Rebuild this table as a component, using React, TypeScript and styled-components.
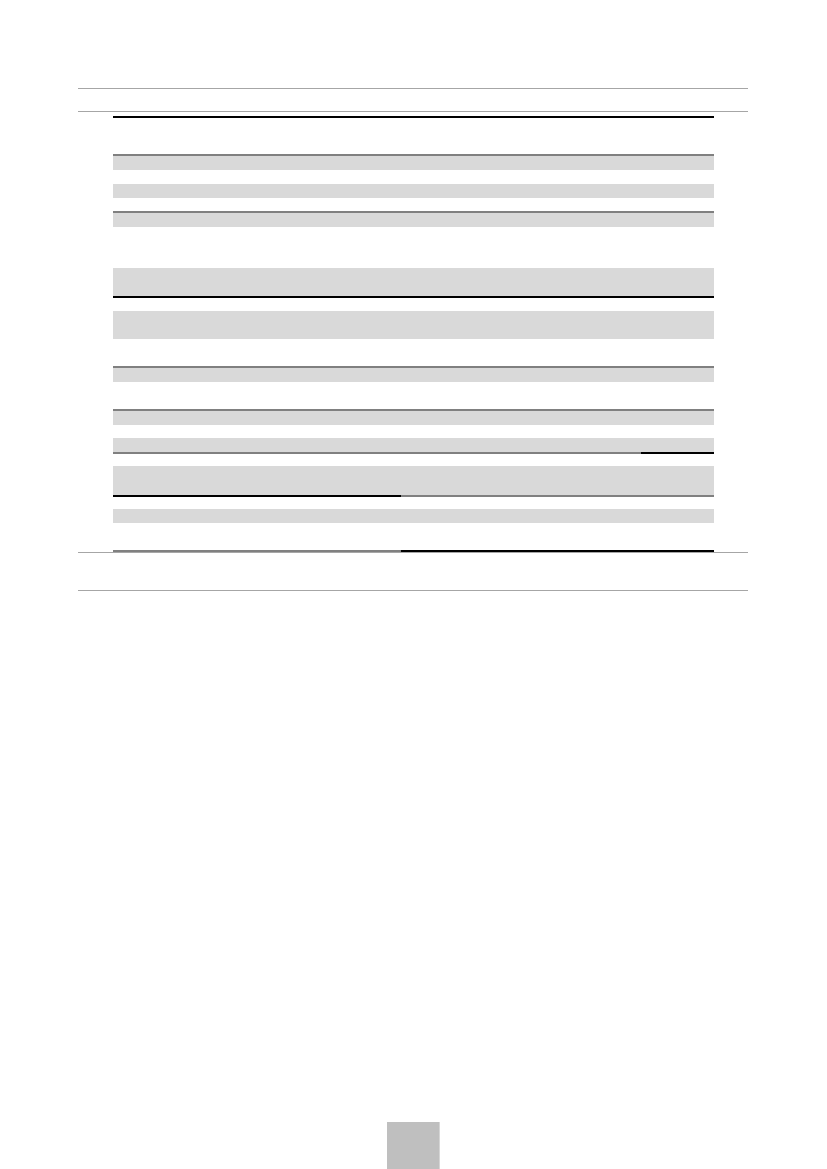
import React from "react";
import styled, {createGlobalStyle} from "styled-components";

const Colors = {
  Band: "#d9d9d9",
  Rule: "#808080",
  Strong: "#000000",
  Page: "#a6a6a6",
  Folio: "#bfbfbf",
};

const GlobalStyle = createGlobalStyle`
  html, body {
    margin: 0;
    padding: 0;
    background: #ffffff;
    font-family: "Liberation Sans", Arial, sans-serif;
  }
`;

const Sheet = styled.div`
  display: flex;
  flex-direction: column;
  width: 827px;
  min-height: 1169px;
`;

const Page = styled.section`
  display: flex;
  flex-direction: column;

  width: 670px;
  margin-left: 78px;
  padding-top: 88px;
`;

const RuleBand = styled.div<{$h: number}>`
  height: ${(p) => p.$h}px;
  border-top: 1px solid ${Colors.Page};
  border-bottom: 1px solid ${Colors.Page};
`;

const Table = styled.div`
  display: flex;
  flex-direction: column;

  width: 601px;
  margin: 4px 0 0 35px;
`;

const Row = styled.div`
  display: grid;
  grid-template-columns: 288px 240px 73px;
`;

const Cell = styled.div<{$h: number; $fill: boolean; $rule?: string}>`
  height: ${(p) => p.$h}px;
  background: ${(p) => (p.$fill ? Colors.Band : "transparent")};
  border-top: ${(p) => (p.$rule ? `2px solid ${p.$rule}` : "none")};
`;

const Folio = styled.div`
  width: 52px;
  height: 47px;
  margin: 531px auto 0;
  background: ${Colors.Folio};
  border-right: 1px solid #d6d6d6;
`;

type Rule = string | [string, string, string] | undefined;

interface RowSpec {
  h: number;
  fill?: boolean;
  rule?: Rule;
}

const G = Colors.Rule;
const K = Colors.Strong;

const rows: RowSpec[] = [
  {h: 36, rule: K},
  {h: 14, fill: true, rule: G},
  {h: 14},
  {h: 14, fill: true},
  {h: 13},
  {h: 14, fill: true, rule: G},
  {h: 41},
  {h: 28, fill: true},
  {h: 13, rule: K},
  {h: 28, fill: true},
  {h: 27},
  {h: 14, fill: true, rule: G},
  {h: 27},
  {h: 14, fill: true, rule: G},
  {h: 13},
  {h: 14, fill: true},
  {h: 12, rule: [G, G, K]},
  {h: 29, fill: true},
  {h: 12, rule: [K, G, G]},
  {h: 14, fill: true},
  {h: 27},
  {h: 0, rule: [G, K, K]},
];

const ruleFor = (rule: Rule, i: number) => (Array.isArray(rule) ? rule[i] : rule);

const App: React.FC = () => {
  return (
    <Sheet>
      <GlobalStyle />
      <Page>
        <RuleBand $h={22} />
        <Table>
          {rows.map((row, r) => (
            <Row key={r}>
              {[0, 1, 2].map((c) => (
                <Cell key={c} $fill={!!row.fill} $h={row.h} $rule={ruleFor(row.rule, c)} />
              ))}
            </Row>
          ))}
        </Table>
        <RuleBand $h={37} />
      </Page>
      <Folio />
    </Sheet>
  );
};

export default App;
